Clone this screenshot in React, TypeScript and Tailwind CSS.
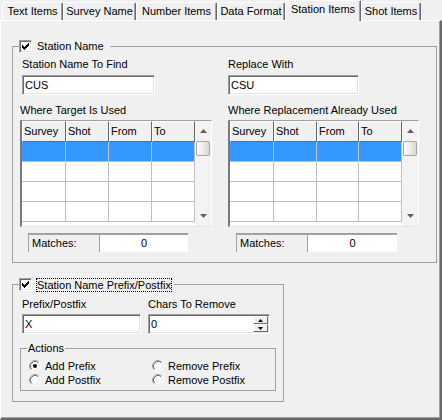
import React from 'react';

type Tab = { label: string; width: string; active?: boolean };

const TABS: Tab[] = [
  { label: 'Text Items', width: 'w-[61px]' },
  { label: 'Survey Name', width: 'w-[73px]' },
  { label: 'Number Items', width: 'w-[81px]' },
  { label: 'Data Format', width: 'w-[68px]' },
  { label: 'Station Items', width: 'w-[76px]', active: true },
  { label: 'Shot Items', width: 'w-[60px]' },
];

// Classic sunken 3D edge used by edit boxes and check boxes
const sunken =
  'border border-t-[#a0a0a0] border-l-[#a0a0a0] border-r-white border-b-white shadow-[inset_1px_1px_0_#696969,inset_-1px_-1px_0_#e3e3e3]';

const raised =
  'border border-t-white border-l-white border-r-[#696969] border-b-[#696969] bg-[#f0f0f0]';

// 7x7 pixel check mark, one column at a time
const CHECK_COLS = [2, 3, 4, 3, 2, 1, 0];

const CheckBox: React.FC = () => (
  <div className={`flex h-[13px] w-[13px] shrink-0 items-center justify-center bg-white ${sunken}`}>
    <svg width="7" height="7" viewBox="0 0 7 7">
      {CHECK_COLS.map((y, x) => (
        <rect key={x} x={x} y={y} width="1" height="3" fill="#000" />
      ))}
    </svg>
  </div>
);

const Radio: React.FC<{ checked?: boolean }> = ({ checked }) => (
  <svg width="12" height="12" viewBox="0 0 12 12" className="shrink-0">
    <circle cx="6" cy="6" r="5.5" fill="#fff" />
    <path d="M2.11 9.89A5.5 5.5 0 0 1 9.89 2.11" fill="none" stroke="#a0a0a0" />
    <path d="M9.89 2.11A5.5 5.5 0 0 1 2.11 9.89" fill="none" stroke="#ffffff" />
    <path d="M2.82 9.18A4.5 4.5 0 0 1 9.18 2.82" fill="none" stroke="#696969" />
    <path d="M9.18 2.82A4.5 4.5 0 0 1 2.82 9.18" fill="none" stroke="#e3e3e3" />
    {checked && <circle cx="6" cy="6" r="2" fill="#000" />}
  </svg>
);

const Arrow: React.FC<{ down?: boolean; color?: string }> = ({ down, color = '#606060' }) => (
  <svg width="7" height="4" viewBox="0 0 7 4">
    <polygon points={down ? '0,0 7,0 3.5,4' : '3.5,0 7,4 0,4'} fill={color} />
  </svg>
);

const TextBox: React.FC<{ value: string; className: string }> = ({ value, className }) => (
  <div className={`flex h-[20px] items-center bg-white pl-[2px] ${sunken} ${className}`}>{value}</div>
);

const Scrollbar: React.FC = () => (
  <div className="flex h-full w-[16px] shrink-0 flex-col items-center bg-[#f3f3f3]">
    <div className="flex h-[20px] items-center justify-center">
      <Arrow />
    </div>
    <div className="h-[15px] w-[14px] rounded-[2px] border border-[#a6a6a6] bg-linear-to-r from-[#fbfbfb] via-[#ededed] to-[#d6d6d6]" />
    <div className="flex-1" />
    <div className="flex h-[20px] items-center justify-center">
      <Arrow down />
    </div>
  </div>
);

const COLUMNS = ['Survey', 'Shot', 'From', 'To'];

const Grid: React.FC<{ widths: string[]; className: string }> = ({ widths, className }) => (
  <div
    className={`flex h-[107px] border-t border-l-2 border-r border-b border-t-[#a0a0a0] border-l-[#7a7a7a] border-r-white border-b-[#e3e3e3] bg-white ${className}`}
  >
    <div className="flex flex-1 flex-col overflow-hidden">
      <div className="flex h-[21px] shrink-0">
        {COLUMNS.map((c, i) => (
          <div key={c} className={`flex h-full items-center pl-[1px] ${raised} ${widths[i]}`}>
            {c}
          </div>
        ))}
      </div>
      {[0, 1, 2, 3].map((r) => (
        <div
          key={r}
          className={`flex h-[20px] shrink-0 border-b border-b-[#c0c0c0] ${r === 0 ? 'bg-[#3399ff]' : 'bg-white'}`}
        >
          {COLUMNS.map((c, i) => (
            <div key={c} className={`h-full border-r border-r-[#c0c0c0] ${widths[i]}`} />
          ))}
        </div>
      ))}
    </div>
    <Scrollbar />
  </div>
);

const Matches: React.FC<{ className: string }> = ({ className }) => (
  <div className={`flex h-[19px] border-t-2 border-t-[#a0a0a0] ${className}`}>
    <div className="flex w-[72px] items-center border-l border-r border-l-[#a0a0a0] border-r-[#a0a0a0] bg-[#f0f0f0] pl-[3px]">
      Matches:
    </div>
    <div className="flex flex-1 items-center justify-center bg-white">0</div>
  </div>
);

const SpinBox: React.FC<{ value: string }> = ({ value }) => (
  <div className={`flex h-[20px] w-[122px] items-center bg-white pl-[2px] ${sunken}`}>
    <span className="flex-1">{value}</span>
    <div className="mr-[1px] flex h-[16px] w-[15px] flex-col">
      <div className={`flex flex-1 items-center justify-center ${raised}`}>
        <svg width="5" height="3" viewBox="0 0 5 3">
          <polygon points="2.5,0 5,3 0,3" fill="#000" />
        </svg>
      </div>
      <div className={`flex flex-1 items-center justify-center ${raised}`}>
        <svg width="5" height="3" viewBox="0 0 5 3">
          <polygon points="0,0 5,0 2.5,3" fill="#000" />
        </svg>
      </div>
    </div>
  </div>
);

const App: React.FC = () => {
  return (
    <div className="h-[420px] w-[442px] overflow-hidden bg-[#f0f0f0] font-['Liberation_Sans',Arial,sans-serif] text-[11px] leading-[13px] text-black">
      {/* Tab strip */}
      <div className="flex h-[20px] items-end pl-[2px]">
        {TABS.map((t) =>
          t.active ? (
            <div
              key={t.label}
              className={`relative z-10 -mb-px flex h-[21px] justify-center rounded-t-[2px] border-t border-l border-r border-t-white border-l-white border-r-[#696969] bg-[#f0f0f0] pt-[2px] shadow-[inset_-1px_0_0_#a0a0a0] ${t.width}`}
            >
              {t.label}
            </div>
          ) : (
            <div
              key={t.label}
              className={`flex h-[18px] justify-center rounded-t-[2px] border-t border-l border-r border-t-white border-l-white border-r-[#696969] pt-[2px] shadow-[inset_-1px_0_0_#a0a0a0] ${t.width}`}
            >
              {t.label}
            </div>
          ),
        )}
      </div>

      {/* Tab page */}
      <div className="h-[400px] border-t border-l border-r-2 border-b-2 border-t-white border-l-white border-r-[#696969] border-b-[#696969] pl-[11px] shadow-[inset_-1px_-1px_0_#a0a0a0]">
        {/* Station Name group */}
        <fieldset className="mt-[19px] w-[425px] border border-[#a0a0a0]">
          <legend className="ml-[6px] flex h-[13px] items-center gap-[5px] pr-[6px]">
            <CheckBox />
            <span>Station Name</span>
          </legend>
          <div className="flex gap-[16px] pl-[7px] pb-[10px]">
            <div className="flex w-[192px] flex-col">
              <div className="ml-[2px] mt-[5px]">Station Name To Find</div>
              <TextBox value="CUS" className="ml-[2px] mt-[4px] w-[133px]" />
              <div className="mt-[9px]">Where Target Is Used</div>
              <Grid widths={['w-[44px]', 'w-[43px]', 'w-[43px]', 'w-[43px]']} className="mt-[3px] w-[192px]" />
              <Matches className="ml-[8px] mt-[6px] w-[160px]" />
            </div>
            <div className="flex w-[191px] flex-col">
              <div className="mt-[5px]">Replace With</div>
              <TextBox value="CSU" className="mt-[4px] w-[131px]" />
              <div className="mt-[9px]">Where Replacement Already Used</div>
              <Grid widths={['w-[44px]', 'w-[43px]', 'w-[42px]', 'w-[43px]']} className="mt-[3px] w-[191px]" />
              <Matches className="ml-[8px] mt-[6px] w-[161px]" />
            </div>
          </div>
        </fieldset>

        {/* Prefix / Postfix group */}
        <fieldset className="mt-[15px] w-[272px] border border-[#a0a0a0]">
          <legend className="ml-[6px] flex h-[13px] items-center gap-[4px] pr-[2px]">
            <CheckBox />
            <span className="border border-dotted border-black leading-[12px]">Station Name Prefix/Postfix</span>
          </legend>
          <div className="flex flex-col pl-[7px] pb-[10px]">
            <div className="ml-[2px] mt-[7px] grid grid-cols-[119px_122px] gap-x-[7px]">
              <div>Prefix/Postfix</div>
              <div>Chars To Remove</div>
              <TextBox value="X" className="mt-[3px] w-[119px]" />
              <div className="mt-[3px]">
                <SpinBox value="0" />
              </div>
            </div>

            <fieldset className="mt-[8px] w-[256px] border border-[#a0a0a0]">
              <legend className="ml-[6px] px-[1px]">Actions</legend>
              <div className="mt-[4px] grid grid-cols-[123px_auto] pl-[8px] pb-[3px]">
                <label className="flex h-[14px] items-center gap-[4px]">
                  <Radio checked />
                  <span>Add Prefix</span>
                </label>
                <label className="flex h-[14px] items-center gap-[4px]">
                  <Radio />
                  <span>Remove Prefix</span>
                </label>
                <label className="flex h-[14px] items-center gap-[4px]">
                  <Radio />
                  <span>Add Postfix</span>
                </label>
                <label className="flex h-[14px] items-center gap-[4px]">
                  <Radio />
                  <span>Remove Postfix</span>
                </label>
              </div>
            </fieldset>
          </div>
        </fieldset>
      </div>
    </div>
  );
};

export default App;
